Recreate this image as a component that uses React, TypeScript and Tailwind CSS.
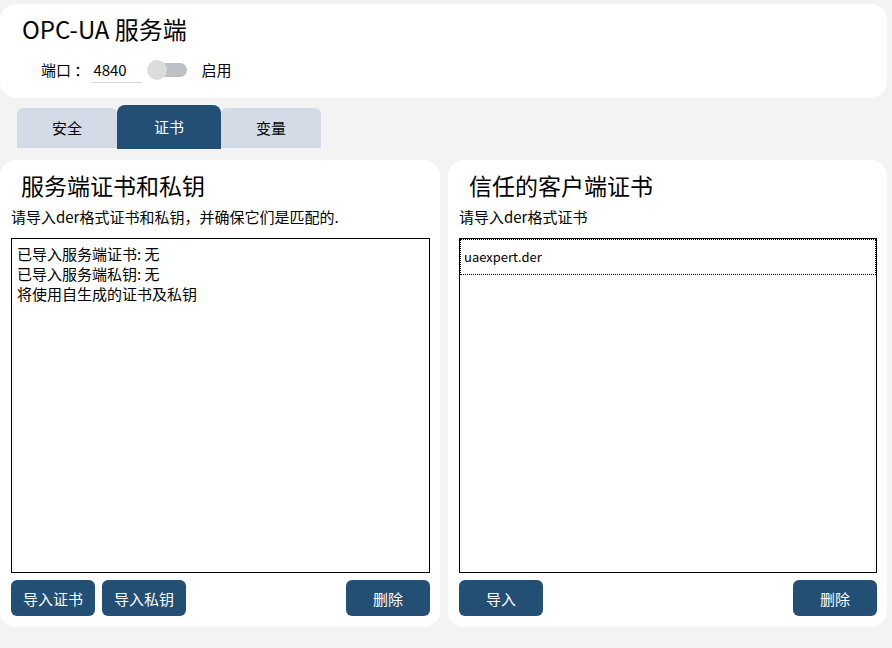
import React, { useState } from 'react';

const font = { fontFamily: '"Noto Sans CJK SC", "Noto Sans", sans-serif' };

function Toggle({ on, onChange }: { on: boolean; onChange: (v: boolean) => void }) {
  return (
    <button onClick={() => onChange(!on)} className="relative w-[40px] h-[20px] flex items-center">
      <span className="absolute left-[6px] right-0 h-[14px] rounded-full bg-[#bdc1c6]" />
      <span className={`absolute top-0 w-[20px] h-[20px] rounded-full bg-[#dcdcdc] ${on ? 'left-[20px]' : 'left-0'}`} />
    </button>
  );
}

function Btn({ children }: { children: React.ReactNode }) {
  return (
    <button className="w-[84px] h-[36px] rounded-md bg-[#234f75] text-white text-[15px] leading-none">
      {children}
    </button>
  );
}

export default function App() {
  const [tab, setTab] = useState('证书');
  const [enabled, setEnabled] = useState(false);
  const tabs = ['安全', '证书', '变量'];

  return (
    <div style={font} className="w-[892px] h-[648px] bg-[#f3f3f3] pt-[4px] pr-[5px] text-black overflow-hidden">
      <div className="h-[94px] rounded-2xl bg-white pl-[22px] pt-[9px]">
        <h1 className="text-[24px] leading-[32px]">OPC-UA 服务端</h1>
        <div className="flex items-center mt-[12px] pl-[19px] text-[15px]">
          <span>端口 ：</span>
          <input
            defaultValue="4840"
            className="w-[51px] h-[26px] ml-[2px] px-[2px] border-b border-[#d8d8d8] outline-none text-[15px]"
          />
          <div className="ml-[5px]">
            <Toggle on={enabled} onChange={setEnabled} />
          </div>
          <span className="ml-[14px]">启用</span>
        </div>
      </div>

      <div className="flex items-end h-[45px] mt-[6px] pl-[17px]">
        {tabs.map(t => (
          <button
            key={t}
            onClick={() => setTab(t)}
            className={
              t === tab
                ? 'w-[104px] h-[44px] rounded-t-lg bg-[#234f75] text-white text-[15px]'
                : 'w-[100px] h-[40px] rounded-t-md bg-[#d3dbe6] text-[15px] mb-[1px]'
            }
          >
            {t}
          </button>
        ))}
      </div>

      <div className="flex gap-2 mt-[11px] h-[467px]">
        <div className="w-[440px] rounded-2xl bg-white pl-[11px] pr-[10px] flex flex-col">
          <h2 className="text-[23px] leading-[30px] mt-[10px] pl-[10px]">服务端证书和私钥</h2>
          <p className="text-[15px] leading-[20px] mt-[7px]">请导入der格式证书和私钥，并确保它们是匹配的.</p>
          <div className="mt-[11px] h-[335px] border border-black px-[5px] pt-[5px] text-[15px] leading-[20px]">
            <div>已导入服务端证书: 无</div>
            <div>已导入服务端私钥: 无</div>
            <div>将使用自生成的证书及私钥</div>
          </div>
          <div className="flex gap-[7px] mt-[7px]">
            <Btn>导入证书</Btn>
            <Btn>导入私钥</Btn>
            <div className="flex-1" />
            <Btn>删除</Btn>
          </div>
        </div>

        <div className="w-[439px] rounded-2xl bg-white pl-[11px] pr-[10px] flex flex-col">
          <h2 className="text-[23px] leading-[30px] mt-[10px] pl-[10px]">信任的客户端证书</h2>
          <p className="text-[15px] leading-[20px] mt-[7px]">请导入der格式证书</p>
          <div className="mt-[11px] h-[335px] border border-black">
            <div className="h-[36px] border border-dotted border-black flex items-center px-[3px] text-[13px]">
              uaexpert.der
            </div>
          </div>
          <div className="flex mt-[7px]">
            <Btn>导入</Btn>
            <div className="flex-1" />
            <Btn>删除</Btn>
          </div>
        </div>
      </div>
    </div>
  );
}
